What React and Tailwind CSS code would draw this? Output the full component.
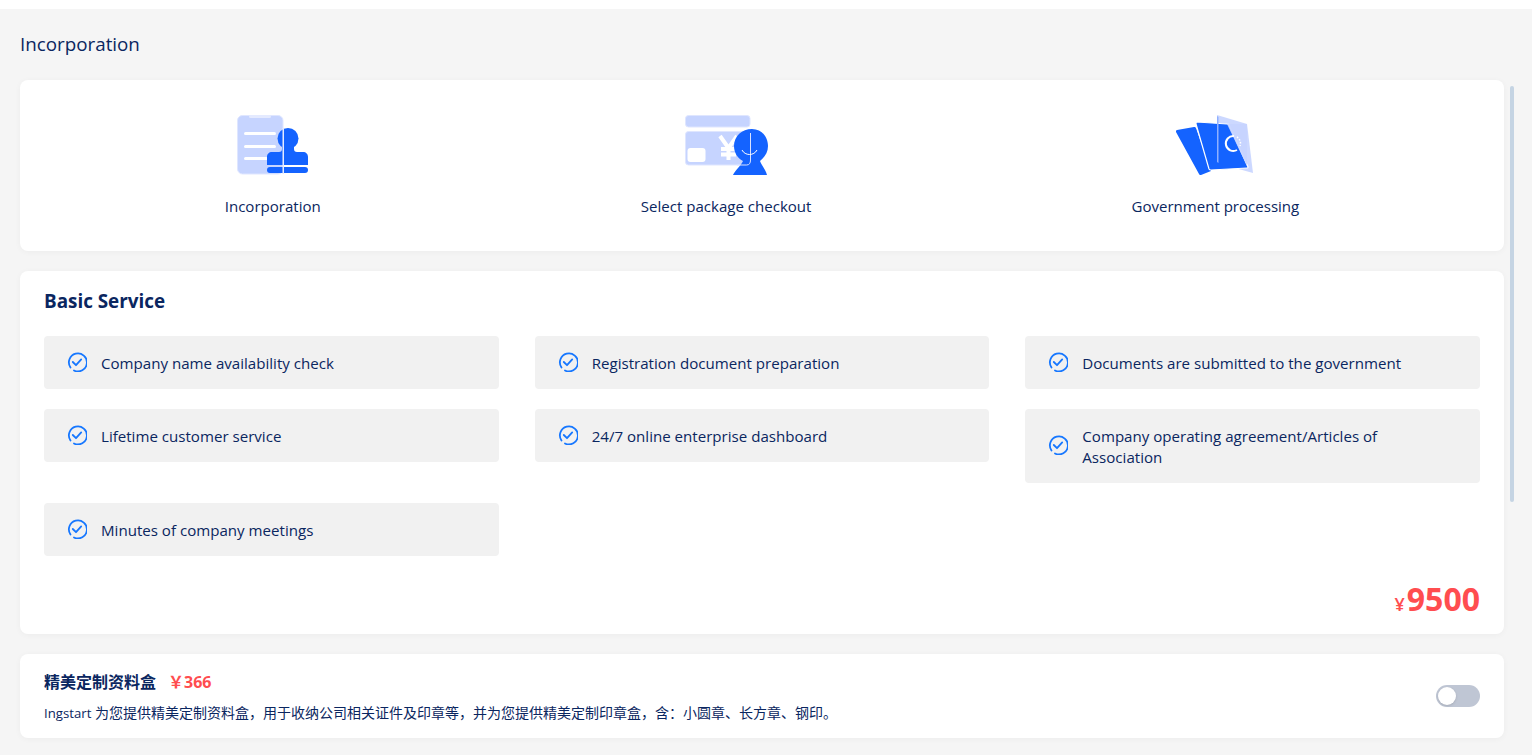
import React from 'react'

const FONT = '"Open Sans", "Noto Sans", "Noto Sans CJK SC", sans-serif'

const basics = [
  'Company name availability check',
  'Registration document preparation',
  'Documents are submitted to the government',
  'Lifetime customer service',
  '24/7 online enterprise dashboard',
  'Company operating agreement/Articles of Association',
  'Minutes of company meetings',
]

const StampIcon = () => (
  <svg width="72" height="60" viewBox="0 0 72 60">
    <rect x="0.500" y="0.500" width="45.500" height="58.500" rx="5" fill="#c6d4ff" stroke="#dfe6ff" />
    <rect x="12" y="0" width="22" height="3" rx="1.500" fill="#e4eaff" />
    <rect x="7" y="17" width="32" height="3" rx="1.500" fill="#fff" />
    <rect x="7" y="30" width="32" height="3" rx="1.500" fill="#fff" />
    <rect x="7" y="42" width="24" height="3" rx="1.500" fill="#fff" />
    <circle cx="51" cy="23.500" r="10.500" fill="#1463ff" />
    <path d="M45 30h12v4c0 2 1 3 3 3h6c3 0 5 2 5 5v8H30v-8c0-3 2-5 5-5h7c2 0 3-1 3-3z" fill="#1463ff" />
    <rect x="30" y="52" width="41" height="6" rx="3" fill="#1463ff" />
    <rect x="45.500" y="13" width="1.500" height="46" fill="#e4eaff" />
  </svg>
)

const CardIcon = () => (
  <svg width="84" height="60" viewBox="0 0 84 60">
    <rect x="1.500" y="0.500" width="64.500" height="11.500" rx="3" fill="#c6d4ff" stroke="#dfe6ff" />
    <rect x="1.500" y="16.500" width="64.500" height="33.500" rx="3" fill="#c6d4ff" stroke="#dfe6ff" />
    <rect x="3.500" y="33" width="18" height="14" rx="3" fill="#fff" />
    <path d="M36 21l8.500 12 8.500-12M44.500 33v12M37 34h15M37 39.500h15" fill="none" stroke="#fff" strokeWidth="4" />
    <path d="M49 60c2-5 8-9 10-14-6-3-9-9-9-15 0-10 8-17 18-17s16 8 16 17c0 6-3 11-8 15 2 5 6 9 7 14z" fill="#1463ff" />
    <path d="M66.500 18v27c0 3-1 5-4 5H53" fill="none" stroke="#d9e2ff" strokeWidth="1" />
    <path d="M58 35c3 6 12 6 15 0" fill="none" stroke="#fff" strokeWidth="1" />
  </svg>
)

const DocsIcon = () => (
  <svg width="78" height="60" viewBox="0 0 78 60">
    <path d="M1 15l17-3c1 0 1.500 0 2 1l15 43-10 4c-1 0-1.500 0-2-1L0 17c0-1 0-2 1-2z" fill="#1463ff" />
    <path d="M41 0l30 9 6 49-36-10z" fill="#c6d4ff" fillOpacity="0.9" />
    <path d="M21 7l30 2c1 0 1.500 0 2 1l19 42c0 1 0 1-1 1l-36 2c-1 0-1.500 0-2-1L20 9c0-1 0-2 1-2z" fill="#1463ff" stroke="#fff" strokeWidth="1.200" />
    <path d="M41 1l1.500 1v46l-1.500-1z" fill="#8fb0ff" />
    <path d="M71 9l-20 0 20 42z" fill="#c6d4ff" fillOpacity="0.9" />
    <path d="M58 21a7.500 7.500 0 1 0 3 14" fill="none" stroke="#fff" strokeWidth="2" />
    <path d="M61 22a7.500 7.500 0 0 1 3 9" fill="none" stroke="#fff" strokeWidth="1.500" strokeDasharray="1.500 1.500" />
  </svg>
)

const CheckIcon = () => (
  <svg className="shrink-0 -translate-y-px" width="20" height="20" viewBox="0 0 20 20" fill="none" stroke="#1677ff" strokeWidth="1.800" strokeLinecap="round" strokeLinejoin="round">
    <path d="M3.500 15.500A9 9 0 1 1 7 18.500" />
    <path d="M5.800 10l3.200 3.200 5.200-5.800" />
  </svg>
)

const Step = ({ icon, label }) => (
  <div className="flex flex-col items-center">
    <div className="h-[62px] flex items-center justify-center">{icon}</div>
    <div className="mt-5 text-[15.05px] leading-5 text-[#0a2660]">{label}</div>
  </div>
)

export default function App() {
  return (
    <div className="h-[755px] overflow-hidden bg-[#f5f5f5]" style={{ fontFamily: FONT }}>
      <div className="h-[9px] bg-white" />
      <div className="relative px-5">
        <h1 className="pt-[22px] h-[71px] text-[18.8px] leading-[26px] text-[#0a2660]">Incorporation</h1>

        <div className="h-[171px] w-[1484px] rounded-lg bg-white shadow-[0_1px_6px_rgba(0,0,0,0.04)] pt-[34px] flex justify-center gap-80">
          <Step icon={<StampIcon />} label="Incorporation" />
          <Step icon={<CardIcon />} label="Select package checkout" />
          <Step icon={<DocsIcon />} label="Government processing" />
        </div>

        <div className="mt-5 h-[363px] w-[1484px] rounded-lg bg-white shadow-[0_1px_6px_rgba(0,0,0,0.04)] px-6 pt-[17px]">
          <h2 className="text-[18.85px] leading-[26px] font-bold text-[#0a2660]">Basic Service</h2>
          <div className="mt-[22px] grid grid-cols-3 gap-x-9 gap-y-5 items-start">
            {basics.map(text => (
              <div key={text} className="flex items-center gap-[14px] rounded bg-[#f1f1f1] pl-[23px] pr-[60px] py-4 min-h-[53px] text-[15.1px] leading-[21px] text-[#0a2660]">
                <CheckIcon />
                <span className="translate-y-px">{text}</span>
              </div>
            ))}
          </div>
          <div className="mt-[22px] flex items-baseline justify-end text-[#ff4d4f] font-bold">
            <span className="text-lg font-semibold mr-[2px]">¥</span>
            <span className="text-[32px] leading-[42px]">9500</span>
          </div>
        </div>

        <div className="mt-5 h-[84px] w-[1484px] rounded-lg bg-white shadow-[0_1px_6px_rgba(0,0,0,0.04)] px-6 flex items-center justify-between">
          <div className="pt-[3px]">
            <div className="flex items-center text-[#0a2660] font-bold text-base leading-5">
              <span>精美定制资料盒</span>
              <span className="ml-3 text-[#ff4d4f]">￥366</span>
            </div>
            <p className="mt-[11px] text-sm leading-5 text-[#0a2660]"><span className="text-[13.2px]">Ingstart</span> 为您提供精美定制资料盒，用于收纳公司相关证件及印章等，并为您提供精美定制印章盒，含：小圆章、长方章、钢印。</p>
          </div>
          <div className="w-11 h-[22px] rounded-full bg-[#bfc6d4] p-[2px]">
            <div className="w-[18px] h-[18px] rounded-full bg-white shadow" />
          </div>
        </div>

        <div className="absolute right-[18px] top-[77px] w-1 h-[416px] rounded-full bg-[#c5d4e3]" />
      </div>
    </div>
  )
}
